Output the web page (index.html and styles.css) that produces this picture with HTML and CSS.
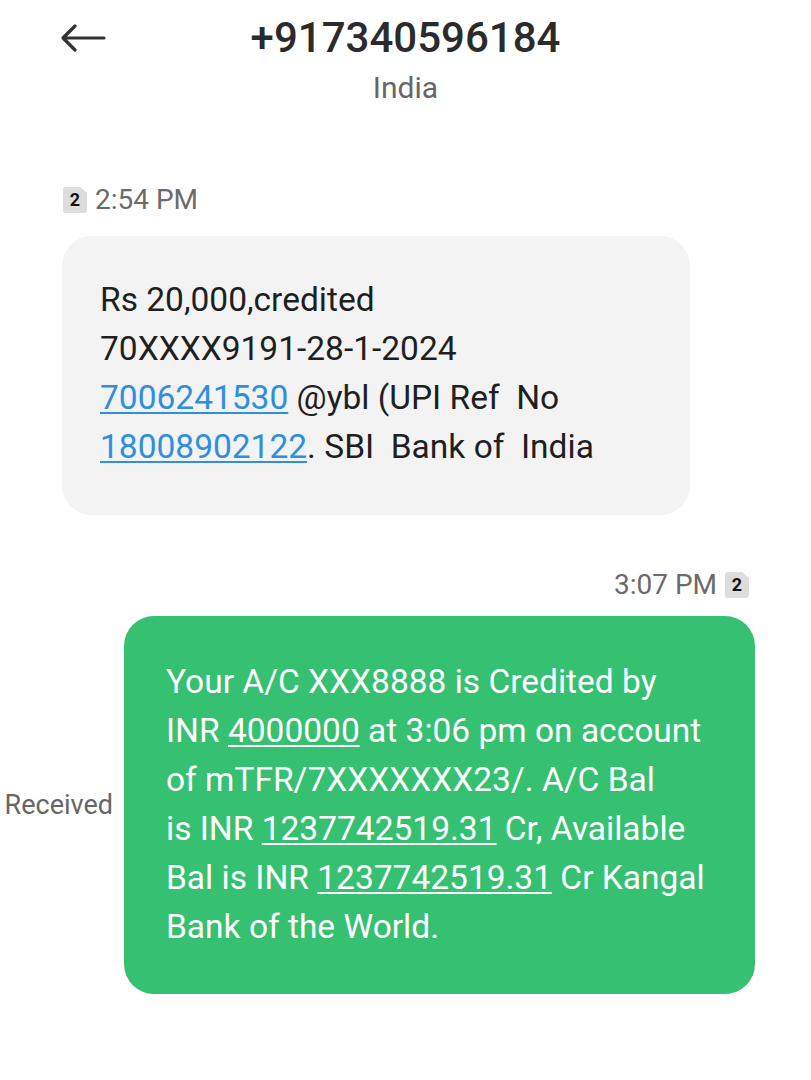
FILE: index.html
```html
<!DOCTYPE html>
<html lang="en">
<head>
    <meta charset="UTF-8">
    <meta name="viewport" content="width=device-width, initial-scale=1.0">
    <title>+917340596184</title>
    <link rel="stylesheet" href="styles.css">
</head>
<body>

    <div class="header">
        <div class="back">
            <svg width="46" height="28" viewBox="0 0 46 28">
                <path d="M44 14H3M15 2L3 14l12 12" fill="none" stroke="#333" stroke-width="3.2" stroke-linecap="round" stroke-linejoin="round"/>
            </svg>
        </div>
        <div class="contact">
            <div class="number">+917340596184</div>
            <div class="country">India</div>
        </div>
        <div></div>
    </div>

    <div class="thread">
        <div class="stamp stamp-in">
            <span class="sim">2</span>
            <span>2:54 PM</span>
        </div>
        <div class="bubble bubble-in">
            Rs 20,000,credited<br>
            70XXXX9191-28-1-2024<br>
            <a href="#">7006241530</a> @ybl (UPI Ref&nbsp; No<br>
            <a href="#">18008902122</a>. SBI&nbsp; Bank of&nbsp; India
        </div>

        <div class="stamp stamp-out">
            <span>3:07 PM</span>
            <span class="sim">2</span>
        </div>
        <div class="out-row">
            <div class="status">Received</div>
            <div class="bubble bubble-out">
                Your A/C XXX8888 is Credited by INR <u>4000000</u> at 3:06 pm on account of mTFR/7XXXXXXX23/. A/C Bal<br>is INR <u>1237742519.31</u> Cr, Available Bal is INR <u>1237742519.31</u> Cr Kangal Bank of the World.
            </div>
        </div>
    </div>

</body>
</html>
```

FILE: styles.css
```css
body {
    margin: 0;
    font-family: Roboto, "Noto Sans", sans-serif;
    background: #fff;
    color: #222;
}
.header {
    display: grid;
    grid-template-columns: 1fr auto 1fr;
    padding-top: 13px;
}
.back {
    margin-left: 60px;
    margin-top: 11px;
}
.contact {
    text-align: center;
}
.number {
    font-size: 42px;
    line-height: 50px;
    font-weight: 500;
    color: #2b2b2b;
}
.country {
    font-size: 30px;
    line-height: 36px;
    margin-top: 7px;
    color: #666;
}
.thread {
    padding-top: 81px;
}
.stamp {
    display: flex;
    align-items: center;
    gap: 8px;
    font-size: 28px;
    line-height: 26px;
    color: #6b6b6b;
}
.stamp-in {
    margin-left: 63px;
}
.stamp-out {
    justify-content: flex-end;
    margin-right: 62px;
    margin-top: 57px;
}
.sim {
    display: inline-block;
    width: 24px;
    height: 26px;
    line-height: 26px;
    text-align: center;
    font-size: 18px;
    font-weight: bold;
    color: #111;
    background: #dddddd;
    border-radius: 3px;
    clip-path: polygon(0 0, 72% 0, 100% 22%, 100% 100%, 0 100%);
}
.bubble {
    font-size: 33.5px;
    line-height: 49px;
    border-radius: 30px;
}
.bubble-in {
    margin: 23px 0 0 62px;
    width: 628px;
    box-sizing: border-box;
    padding: 39px 38px 44px;
    background: #f3f3f3;
    color: #1f1f1f;
}
.bubble-in a {
    color: #2f8ee0;
    text-decoration: underline;
    text-decoration-thickness: 2px;
    text-underline-offset: 3px;
}
.out-row {
    display: flex;
    align-items: center;
    justify-content: flex-end;
    gap: 11px;
    margin-top: 18px;
    margin-right: 56px;
}
.status {
    font-size: 27px;
    color: #666;
}
.bubble-out {
    width: 631px;
    box-sizing: border-box;
    padding: 41px 42px 43px;
    background: #36c072;
    color: #fff;
}
.bubble-out u {
    text-decoration-thickness: 2px;
    text-underline-offset: 3px;
}
```
